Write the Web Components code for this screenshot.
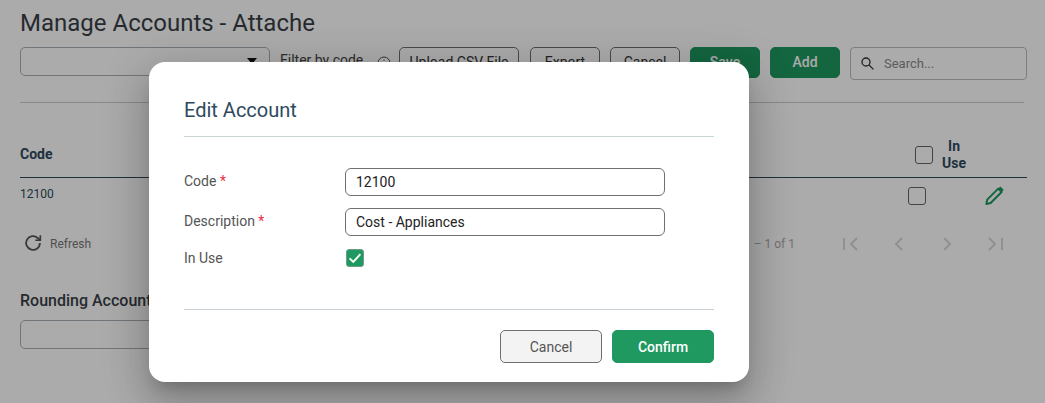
<!DOCTYPE html>
<html><head><meta charset="utf-8"><title>Manage Accounts</title>
<style>
html,body{margin:0;padding:0;height:403px;overflow:hidden;background:#fff;font-family:Roboto,sans-serif}
</style></head><body>
<template id="t-btn"><style>
:host{display:flex;flex:none;align-items:center;justify-content:center;box-sizing:border-box;width:var(--w,70px);height:var(--h,31px);border-radius:5px;font:14px/1 Roboto,sans-serif;border:1px solid #6f6f6f;color:#333;background:#fff;padding-bottom:var(--pb,2px)}
:host([primary]){background:#1f9960;border-color:#1f9960;color:#fff;font-weight:500}
</style><slot></slot></template>

<template id="t-check"><style>
:host{display:block;flex:none;box-sizing:border-box;width:18px;height:18px;border:1px solid #666;border-radius:3px;background:#fff}
:host([checked]){background:#1f9960;border-color:#6b9e85}
svg{display:none;width:16px;height:16px}
:host([checked]) svg{display:block}
</style><svg viewBox="0 0 16 16" fill="none" stroke="#fff" stroke-width="1.9"><path d="M2.6 8.4 6.3 12 13.4 4.2"/></svg></template>

<template id="t-page"><style>
:host{display:block;box-sizing:border-box;width:1045px;height:403px;padding:9px 18px 0 20px;color:#333;background:#fff;font-family:Roboto,sans-serif}
h1{margin:0;font:400 24px/28px Roboto,sans-serif;color:#3a3f47}
.bar{display:flex;align-items:flex-start;margin-top:10px}
.sel{box-sizing:border-box;flex:none;width:250px;height:29px;border:1px solid #a9b0b6;border-radius:5px;position:relative;background:#fff}
.sel i{position:absolute;right:12px;top:10px;border:5px solid transparent;border-top:6px solid #111;border-bottom:0}
.filter{margin-left:11px;flex:none;width:118px;font-size:14px;line-height:26px;color:#444;display:flex;justify-content:space-between;align-items:center;height:26px}
.filter span{margin-left:-1px}
.filter svg{width:14px;height:14px;flex:none;margin-top:6px;margin-right:8px}
.bar x-btn{margin-left:10px}
.bar x-btn.up{margin-left:0}
.bar x-btn.ex{margin-left:11px}
.search{box-sizing:border-box;flex:none;margin-left:10px;width:177px;height:33px;border:1px solid #bdbdbd;border-radius:4px;display:flex;align-items:center;gap:9px;padding-left:9px;font-size:13px;color:#8a8a8a;background:#fff}
.search svg{width:15px;height:15px}
hr{height:1px;margin:22px 3px 0 0;border:0;background:#c6ced4}
.thead{display:flex;align-items:center;height:75px;box-sizing:border-box;border-bottom:1px solid #2e4a5e;color:#2e4a5e;font-weight:700;font-size:14px;padding-top:30px}
.thead .c{flex:1;margin-top:-2px}
.thead .iu{display:flex;align-items:center;gap:9px;margin-right:61px;text-align:center;line-height:17px}
.row{display:flex;align-items:center;height:35px;font-size:12px;color:#2e4a5e}
.row .c{flex:1;margin-top:-4px}
.row svg{width:22px;height:22px;margin:-2px 22px 0 57px;flex:none}
.pager{display:flex;align-items:center;height:34px;margin-top:14px;color:#777;font-size:12px}
.pager .r{display:flex;align-items:center;gap:6px;margin-left:2px;flex:1}
.pager .r svg{width:22px;height:22px;margin-top:-2px}
.pager .of{margin-right:44px;color:#aaa}
.pager .nav{display:flex;gap:24px;margin-right:20px}
.pager .nav svg{width:24px;height:24px;display:block}
h2{margin:0;font:500 16px/20px Roboto,sans-serif;color:#3a3f47;padding-top:30px}
.rinp{box-sizing:border-box;width:250px;height:29px;border:1px solid #a9b0b6;border-radius:5px;margin-top:9px;background:#fff}
</style>
<h1>Manage Accounts - Attache</h1>
<div class="bar">
  <div class="sel"><i></i></div>
  <div class="filter"><span>Filter by code</span><svg viewBox="0 0 14 14" fill="none" stroke="#555" stroke-width="1"><circle cx="7" cy="7" r="6"/><path d="M7 6.2v4M7 3.4v1.2"/></svg></div>
  <x-btn class="up" style="--w:120px">Upload CSV File</x-btn>
  <x-btn class="ex">Export</x-btn>
  <x-btn>Cancel</x-btn>
  <x-btn primary>Save</x-btn>
  <x-btn primary>Add</x-btn>
  <div class="search"><svg viewBox="0 0 15 15" fill="none" stroke="#333" stroke-width="1.3"><circle cx="6" cy="6" r="4"/><path d="M9 9l4.4 4.4"/></svg><span>Search...</span></div>
</div>
<hr>
<div class="thead"><div class="c">Code</div><div class="iu"><x-check></x-check><div>In<br>Use</div></div></div>
<div class="row"><div class="c">12100</div><x-check></x-check><svg viewBox="0 0 22 22" fill="none" stroke="#1f9960" stroke-width="2" stroke-linejoin="round"><path d="M3.4 20 4.2 15.6 15.2 4.6 18.6 8 7.6 19z"/><path d="M16.2 3.6 19.6 7" stroke-width="3.2"/></svg></div>
<div class="pager">
  <div class="r"><svg viewBox="0 0 24 24" fill="none" stroke="#555" stroke-width="2"><path d="M19.5 12a7.5 7.5 0 1 1-2.3-5.4L20 9"/><path d="M20 3.5V9h-5.5" stroke-width="1.8"/></svg><span>Refresh</span></div>
  <span class="of">– 1 of 1</span>
  <div class="nav">
   <svg viewBox="0 0 24 24" fill="none" stroke="#d5d5d5" stroke-width="1.8"><path d="M5 6v12M18 6l-6 6 6 6"/></svg>
   <svg viewBox="0 0 24 24" fill="none" stroke="#d5d5d5" stroke-width="1.8"><path d="M15 6l-6 6 6 6"/></svg>
   <svg viewBox="0 0 24 24" fill="none" stroke="#d5d5d5" stroke-width="1.8"><path d="M9 6l6 6-6 6"/></svg>
   <svg viewBox="0 0 24 24" fill="none" stroke="#d5d5d5" stroke-width="1.8"><path d="M6 6l6 6-6 6M19 6v12"/></svg>
  </div>
</div>
<h2>Rounding Account</h2>
<div class="rinp"></div>
</template>

<template id="t-modal"><style>
:host{position:absolute;inset:0;background:rgba(0,0,0,.33);display:block}
.m{position:absolute;left:149px;top:62px;box-sizing:border-box;width:600px;height:320px;background:#fff;border-radius:16px;box-shadow:0 11px 15px -7px rgba(0,0,0,.2),0 24px 38px 3px rgba(0,0,0,.14),0 9px 46px 8px rgba(0,0,0,.12);padding:0 35px;display:flex;flex-direction:column;font-family:Roboto,sans-serif}
h3{margin:0;box-sizing:border-box;height:75px;border-bottom:1px solid #c7d6d4;font:400 20px/24px Roboto,sans-serif;color:#2e4a5e;padding-top:36px}
.form{display:flex;flex-direction:column;padding-top:31px;border-bottom:1px solid #c9d1d8;height:173px;flex:none;box-sizing:border-box}
.f{display:grid;grid-template-columns:161px 320px;align-items:start;font-size:14px;color:#555}
.f label{line-height:24px;padding-top:1px}
.f b{color:#ef2b45;font-weight:400}
.inp{box-sizing:border-box;height:28px;border:1px solid #6f6f6f;border-radius:6px;padding:0 10px;font-size:14px;line-height:26px;color:#222}
.f + .f{margin-top:12px}
.f.c{margin-top:13px}
.f.c label{line-height:18px;padding-top:0}
.foot{display:flex;justify-content:flex-end;gap:10px;padding-top:20px}
.foot x-btn{--h:33px;--pb:0}
x-btn.cancel{--w:102px;background:#f3f3f3;color:#555}
x-btn[primary]{--w:102px}
</style>
<div class="m">
 <h3>Edit Account</h3>
 <div class="form">
  <div class="f"><label>Code <b>*</b></label><div class="inp">12100</div></div>
  <div class="f"><label>Description <b>*</b></label><div class="inp">Cost - Appliances</div></div>
  <div class="f c"><label>In Use</label><x-check checked style="margin-left:1px"></x-check></div>
 </div>
 <div class="foot"><x-btn class="cancel">Cancel</x-btn><x-btn primary>Confirm</x-btn></div>
</div>
</template>

<x-page></x-page>
<x-modal></x-modal>
<script>
function def(name,id){customElements.define(name,class extends HTMLElement{constructor(){super();this.attachShadow({mode:'open'}).appendChild(document.getElementById(id).content.cloneNode(true));}});}
def('x-btn','t-btn');def('x-check','t-check');def('x-page','t-page');def('x-modal','t-modal');
</script>
</body></html>
